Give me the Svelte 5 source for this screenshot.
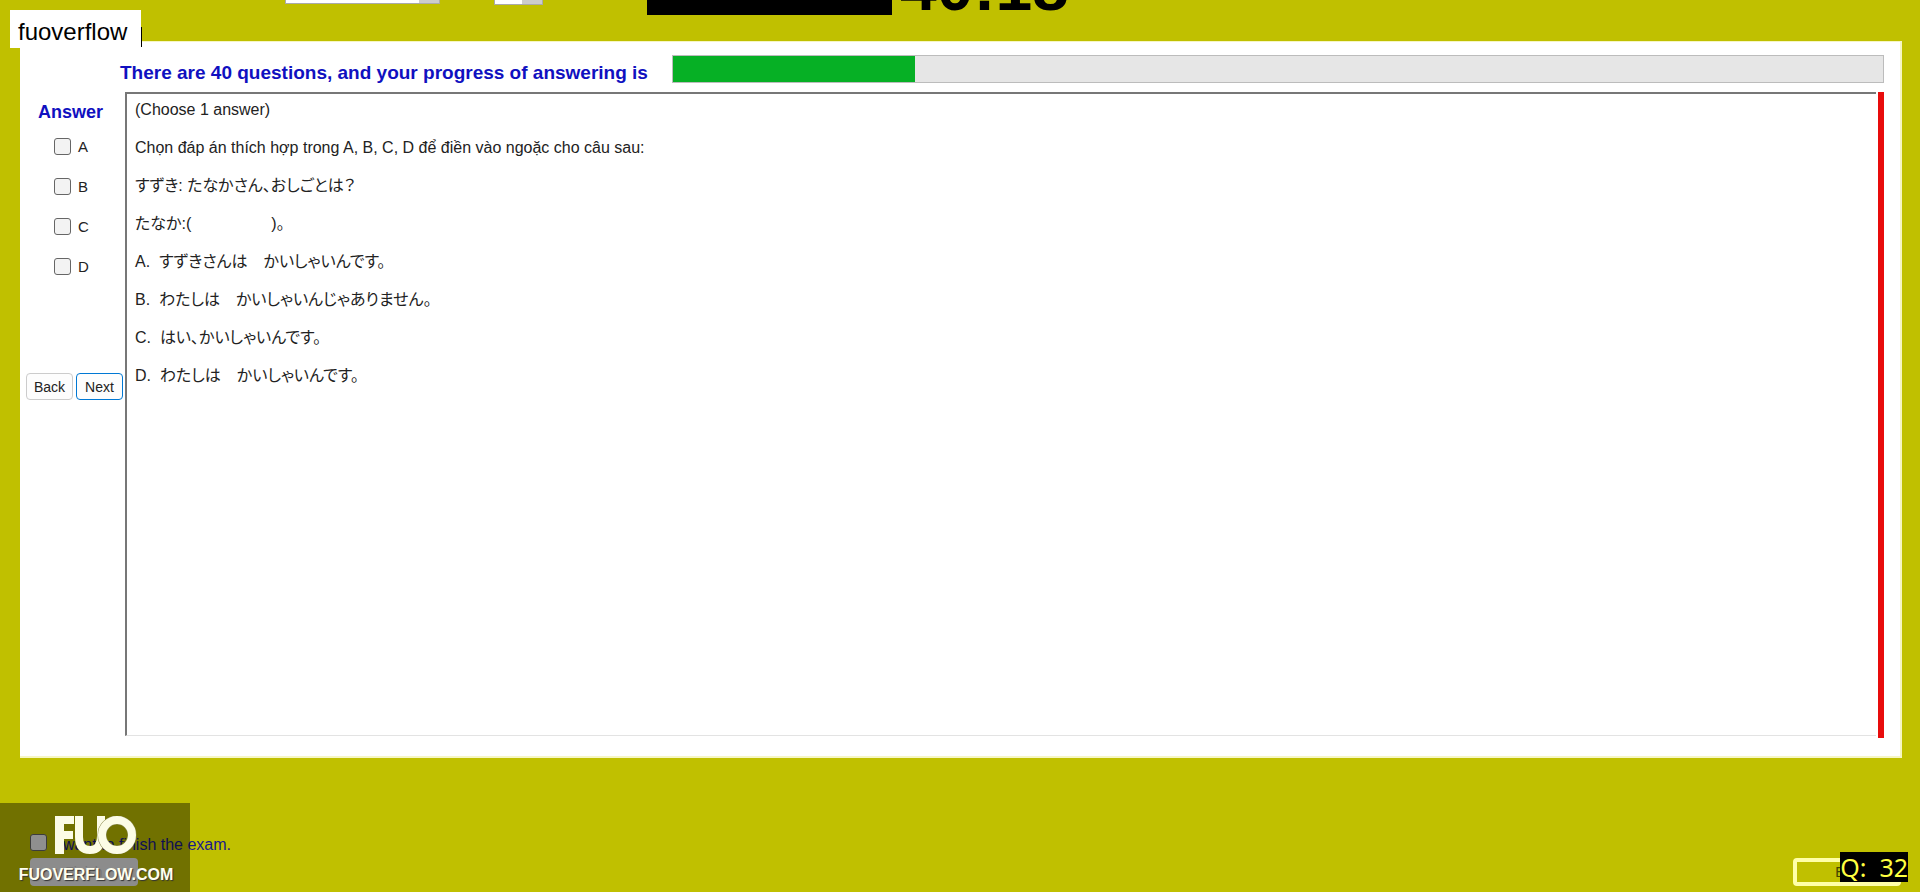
<script>
    const total = 40;
    const answered = 8;
    const choices = ["A", "B", "C", "D"];
    const lines = [
        "(Choose 1 answer)",
        "Chọn đáp án thích hợp trong A, B, C, D để điền vào ngoặc cho câu sau:",
        "すずき: たなかさん、おしごとは？",
        `たなか:(${"\u00a0".repeat(18)})。`,
        "A.\u00a0 すずきさんは　かいしゃいんです。",
        "B.\u00a0 わたしは　かいしゃいんじゃありません。",
        "C.\u00a0 はい、かいしゃいんです。",
        "D.\u00a0 わたしは　かいしゃいんです。",
    ];

    let picked = $state([]);
    let finish = $state(false);
</script>

<div class="page">
    <header>
        <select class="font" aria-label="Font"><option></option></select>
        <select class="size" aria-label="Size"><option></option></select>
        <div class="mask"></div>
        <div class="timer">40:18</div>
    </header>

    <main>
        <div class="progress-row">
            <span class="title" id="progress-label"
                >There are {total} questions, and your progress of answering is</span
            >
            <div
                class="bar"
                role="progressbar"
                aria-labelledby="progress-label"
                aria-valuenow={answered}
                aria-valuemax={total}
            >
                <div class="fill" style="width:{(answered / total) * 100}%"></div>
            </div>
        </div>
        <div class="body">
            <div class="answers">
                <h2>Answer</h2>
                {#each choices as c}
                    <label>
                        <input type="checkbox" value={c} bind:group={picked} />
                        {c}
                    </label>
                {/each}
                <div class="nav">
                    <button>Back</button>
                    <button class="next">Next</button>
                </div>
            </div>
            <div class="question">
                {#each lines as line}
                    <p lang={line.startsWith("Ch") ? "vi" : "ja"}>{line}</p>
                {/each}
            </div>
            <div class="edge"></div>
        </div>
    </main>

    <footer>
        <div class="finish">
            <label>
                <input type="checkbox" bind:checked={finish} />
                <span>I want to finish the exam.</span>
            </label>
            <button disabled={!finish}>Finish</button>
        </div>
        <button class="exit">Exit</button>
    </footer>

    <div class="user">fuoverflow</div>
    <div class="watermark">
        <svg viewBox="0 0 82 38" width="82" height="38" aria-hidden="true">
            <path d="M0 0H19V8H9V15H18V23H9V38H0Z" />
            <path d="M20 0H28V21Q28 30 35 30Q42 30 42 20V0H50V20Q50 38 35 38Q20 38 20 21Z" />
            <circle class="gap" cx="62" cy="19" r="15" />
            <circle class="ring" cx="62" cy="19" r="15" />
        </svg>
        <span>FUOVERFLOW.COM</span>
    </div>
    <div class="counter">Q:&nbsp; 32</div>
</div>

<style>
    :global(body) {
        margin: 0;
        background: #c0c000;
    }
    .page {
        position: relative;
        display: flex;
        flex-direction: column;
        min-height: 100vh;
        overflow: hidden;
        font-family: "Liberation Sans", "Noto Sans CJK JP", sans-serif;
        font-size: 16px;
        color: #222;
    }
    button,
    select {
        font: inherit;
    }
    input[type="checkbox"] {
        appearance: none;
        box-sizing: border-box;
        width: 17px;
        height: 17px;
        margin: 0;
        border: 1px solid #666;
        border-radius: 3px;
        background: #f3f3f3;
    }
    input[type="checkbox"]:checked {
        background: #0067c0;
    }

    /* toolbar, cut by the top of the window */
    header {
        display: flex;
        align-items: flex-end;
        box-sizing: border-box;
        height: 41px;
        padding-left: 285px;
    }
    header select {
        height: 24px;
        border: 1px solid #aaa;
        border-radius: 0;
        background: linear-gradient(#ccc, #ccc) right / 20px 100% no-repeat #fff;
        appearance: none;
    }
    .font {
        width: 155px;
        margin: 0 54px 37px 0;
    }
    .size {
        width: 49px;
        margin: 0 104px 36px 0;
    }
    .mask {
        width: 245px;
        height: 40px;
        margin-bottom: 26px;
        background: #000;
    }
    .timer {
        margin: 0 0 16px 8px;
        font-size: 66px;
        font-weight: bold;
        line-height: 76px;
        color: #000;
    }

    main {
        flex: 1;
        display: flex;
        flex-direction: column;
        margin: 0 18px 0 20px;
        padding: 13px 16px 18px 0;
        border: solid #f6f6c4;
        border-width: 1px 2px 2px 0;
        background: #fff;
    }
    .progress-row {
        display: flex;
        align-items: center;
        gap: 24px;
        margin: 0 0 9px 100px;
    }
    .title,
    h2 {
        font-size: 18px;
        font-weight: bold;
        color: #1010c0;
    }
    .title {
        padding-top: 8px;
        font-size: 19px;
        line-height: 20px;
    }
    .bar {
        flex: 1;
        box-sizing: border-box;
        height: 28px;
        border: 1px solid #bcbcbc;
        background: #e6e6e6;
    }
    .fill {
        height: 100%;
        background: #06b025;
    }
    .body {
        flex: 1;
        display: flex;
    }
    .answers {
        width: 105px;
    }
    h2 {
        margin: 10px 0 14px;
        padding-left: 18px;
        line-height: 20px;
    }
    .answers label {
        display: flex;
        align-items: center;
        gap: 7px;
        height: 20px;
        margin-bottom: 20px;
        padding-left: 34px;
        font-size: 15px;
    }
    .nav {
        display: flex;
        gap: 3px;
        margin-top: 97px;
        padding-left: 6px;
    }
    .nav button {
        width: 47px;
        height: 27px;
        padding: 0;
        border: 1px solid #ccc;
        border-radius: 4px;
        background: #fdfdfd;
        font-size: 14px;
        color: #222;
    }
    .nav .next {
        border-color: #0078d4;
    }
    .question {
        flex: 1;
        box-sizing: border-box;
        margin-bottom: 2px;
        padding: 0 8px;
        border: solid #777;
        border-width: 2px 0 1px 2px;
        border-bottom-color: #e3e3e3;
    }
    .question p {
        margin: 0 0 6px;
        line-height: 32px;
        white-space: pre-wrap;
        font-feature-settings: "palt";
    }
    .edge {
        width: 6px;
        margin-left: 2px;
        background: #e80c0c;
    }

    footer {
        display: flex;
        align-items: flex-end;
        justify-content: space-between;
        box-sizing: border-box;
        height: 134px;
        padding: 0 19px 6px 30px;
    }
    .finish label {
        display: flex;
        align-items: center;
        gap: 7px;
        height: 20px;
        margin-bottom: 6px;
        color: #1a1a8c;
    }
    .finish span {
        padding-top: 6px;
    }
    .finish button,
    .exit {
        display: block;
        width: 108px;
        height: 28px;
        border-radius: 4px;
        font-size: 14px;
    }
    .finish button {
        border: 0;
        background: #eee;
        color: #ccc;
    }
    .exit {
        padding: 0;
        border: 4px solid #ffffa8;
        background: transparent;
        color: #444400;
    }

    /* overlays */
    .user {
        position: absolute;
        top: 10px;
        left: 10px;
        padding: 5px 14px 0 8px;
        background: #fff;
        font-size: 24px;
        line-height: 33px;
        color: #000;
    }
    .user::after {
        content: "";
        position: absolute;
        right: -1px;
        bottom: 1px;
        width: 1px;
        height: 20px;
        background: #000;
    }
    .watermark {
        position: absolute;
        left: 0;
        bottom: 0;
        display: flex;
        flex-direction: column;
        align-items: center;
        gap: 11px;
        box-sizing: border-box;
        width: 190px;
        height: 89px;
        padding: 13px 0 0 2px;
        background: rgba(0, 0, 0, 0.41);
    }
    .watermark svg {
        fill: #fcfce6;
    }
    .watermark .gap,
    .watermark .ring {
        fill: none;
        stroke: #8a8a50;
        stroke-width: 9;
    }
    .watermark .ring {
        stroke: #fcfce6;
        stroke-width: 8;
    }
    .watermark span {
        font-family: Impact, "Liberation Sans", sans-serif;
        font-size: 16px;
        font-weight: bold;
        line-height: 20px;
        color: #fffff0;
        text-shadow: 1px 1px 1px #333;
    }
    .counter {
        position: absolute;
        right: 12px;
        bottom: 10px;
        background: #000;
        font-family: "Noto Sans", sans-serif;
        font-size: 25px;
        line-height: 30px;
        color: #ffff40;
    }
</style>
